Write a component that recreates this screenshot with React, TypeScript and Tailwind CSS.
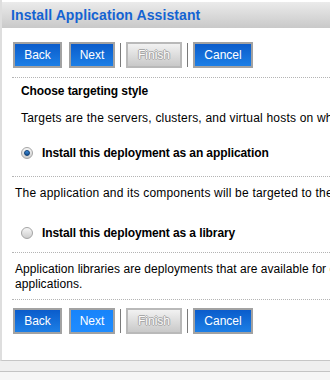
import React from 'react'

const font = { fontFamily: '"Liberation Sans", Arial, sans-serif' }

type Variant = 'normal' | 'hover' | 'disabled'

function WizardButton({ label, width, variant = 'normal' }: { label: string; width: string; variant?: Variant }) {
  if (variant === 'disabled') {
    return (
      <button
        disabled
        className={`${width} h-[26px] border-2 border-[#b9b9b9] bg-gradient-to-b from-[#f2f2f2] to-[#c9c9c9] text-[12px] text-[#fbfbfb] [text-shadow:1px_0_0_#a8a8a8,-1px_0_0_#a8a8a8,0_1px_0_#a8a8a8,0_-1px_0_#a8a8a8]`}
      >
        {label}
      </button>
    )
  }
  const bg =
    variant === 'hover'
      ? 'bg-gradient-to-b from-[#1784fa] to-[#1f8cff]'
      : 'bg-gradient-to-b from-[#0b5ccb] to-[#1d7fe6]'
  return (
    <button className={`${width} h-[26px] border-2 border-[#a2a2a2] ${bg} text-[12px] text-white`}>
      {label}
    </button>
  )
}

function ButtonBar({ nextHover }: { nextHover?: boolean }) {
  return (
    <div className="flex items-center">
      <WizardButton label="Back" width="w-[49px]" />
      <div className="w-[7px]" />
      <WizardButton label="Next" width="w-[46px]" variant={nextHover ? 'hover' : 'normal'} />
      <div className="mx-[5px] w-px h-[24px] bg-[#7a7a7a]" />
      <WizardButton label="Finish" width="w-[56px]" variant="disabled" />
      <div className="mx-[5px] w-px h-[24px] bg-[#7a7a7a]" />
      <WizardButton label="Cancel" width="w-[60px]" />
    </div>
  )
}

function Radio({ checked }: { checked?: boolean }) {
  return (
    <span className="w-[12px] h-[12px] rounded-full border border-[#a4a4a4] bg-gradient-to-b from-[#f6f6f6] to-[#cdcdcd] flex items-center justify-center shrink-0">
      {checked && <span className="w-[6px] h-[6px] rounded-full bg-gradient-to-b from-[#3f8fe0] to-[#16508f] border border-[#0e3f75]" />}
    </span>
  )
}

function Dotted() {
  return <div className="border-t border-dotted border-[#b4b4b4] ml-[10px]" />
}

export default function App() {
  return (
    <div style={font} className="w-[330px] h-[380px] bg-[#f6f6f6] overflow-hidden">
      <div className="bg-white h-[361px] border-l-2 border-[#dedede] border-b border-b-[#c6c6c6] pt-[2px]">
        <div className="h-[26px] bg-gradient-to-b from-[#ebebeb] to-[#c9c9c9] pl-[9px] flex items-center">
          <span className="text-[14px] font-bold text-[#1463d2] whitespace-nowrap tracking-[0.1px]">Install Application Assistant</span>
        </div>
        <div className="pl-[11px] pt-[14px] pb-[9px]">
          <ButtonBar />
        </div>
        <Dotted />
        <div className="pl-[19px] pt-[6px] text-[12px] text-black whitespace-nowrap">
          <div className="font-bold h-[14px] leading-[14px] tracking-[-0.1px]">Choose targeting style</div>
          <div className="mt-[13px] h-[14px] leading-[14px] tracking-[0.2px]">
            Targets are the servers, clusters, and virtual hosts on which this deployment will run.
          </div>
          <div className="mt-[19px] h-[18px] flex items-center gap-[9px]">
            <Radio checked />
            <span className="font-bold tracking-[-0.1px]">Install this deployment as an application</span>
          </div>
        </div>
        <div className="h-[14px]" />
        <Dotted />
        <div className="pl-[13px] pt-[9px] text-[12px] text-black whitespace-nowrap leading-[14px] tracking-[0.2px]">
          The application and its components will be targeted to the same locations.
        </div>
        <div className="pl-[19px] pt-[24px] pb-[10px] text-[12px] text-black">
          <div className="h-[18px] flex items-center gap-[9px]">
            <Radio />
            <span className="font-bold whitespace-nowrap tracking-[-0.1px]">Install this deployment as a library</span>
          </div>
        </div>
        <Dotted />
        <div className="pl-[13px] pt-[9px] pb-[7px] text-[12px] text-black leading-[15px] tracking-[0.05px]">
          <div className="whitespace-nowrap">Application libraries are deployments that are available for other deployments to share.</div>
          <div>applications.</div>
        </div>
        <Dotted />
        <div className="pl-[11px] pt-[8px]">
          <ButtonBar nextHover />
        </div>
      </div>
      <div className="h-[10px] bg-[#efefef]" />
      <div className="h-px bg-[#c4c4c4]" />
    </div>
  )
}
